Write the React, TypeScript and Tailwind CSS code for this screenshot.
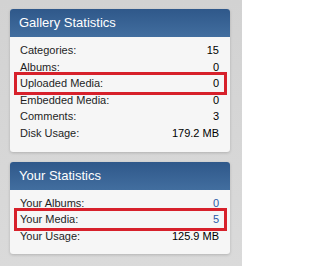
import React from 'react';

interface StatRow {
    label: string;
    value: string;
    highlight?: boolean;
    link?: boolean;
}

const gallery: StatRow[] = [
    { label: "Categories:", value: "15" },
    { label: "Albums:", value: "0" },
    { label: "Uploaded Media:", value: "0", highlight: true },
    { label: "Embedded Media:", value: "0" },
    { label: "Comments:", value: "3" },
    { label: "Disk Usage:", value: "179.2 MB" },
];

const yours: StatRow[] = [
    { label: "Your Albums:", value: "0", link: true },
    { label: "Your Media:", value: "5", highlight: true, link: true },
    { label: "Your Usage:", value: "125.9 MB" },
];

const StatsPanel = ({ title, rows }: { title: string; rows: StatRow[] }) => (
    <div className="rounded-[3px] bg-[#f6f6f6] shadow-[0_1px_3px_rgba(0,0,0,0.18)] overflow-hidden">
        <div className="h-[28px] flex items-center px-[9px] bg-gradient-to-b from-[#2f588a] to-[#426e9f] text-white text-[13px]">
            {title}
        </div>
        <div className="pl-[10px] pr-[11px] pt-[5px] pb-[10px] text-[11px] text-[#1e1e1e]">
            {rows.map((row) => (
                <div key={row.label} className="relative flex justify-between leading-[16.6px]">
                    {/* red callout box drawn over the row */}
                    {row.highlight && (
                        <span className="absolute -left-[6px] -right-[8px] -top-[3px] -bottom-[3px] border-[3px] border-[#d7212b]" />
                    )}
                    <span>{row.label}</span>
                    <span className={row.link ? "text-[#2b5aa8]" : "text-black"}>{row.value}</span>
                </div>
            ))}
        </div>
    </div>
);

export default function App() {
    return (
        <div
            className="w-[242px] h-[266px] bg-gradient-to-b from-[#d2d2d2] to-[#dadada] pt-[9px] px-[10px] pr-[12px] flex flex-col gap-[10px]"
            style={{ fontFamily: '"Liberation Sans", Arial, sans-serif' }}
        >
            <StatsPanel title="Gallery Statistics" rows={gallery} />
            <StatsPanel title="Your Statistics" rows={yours} />
        </div>
    );
}
